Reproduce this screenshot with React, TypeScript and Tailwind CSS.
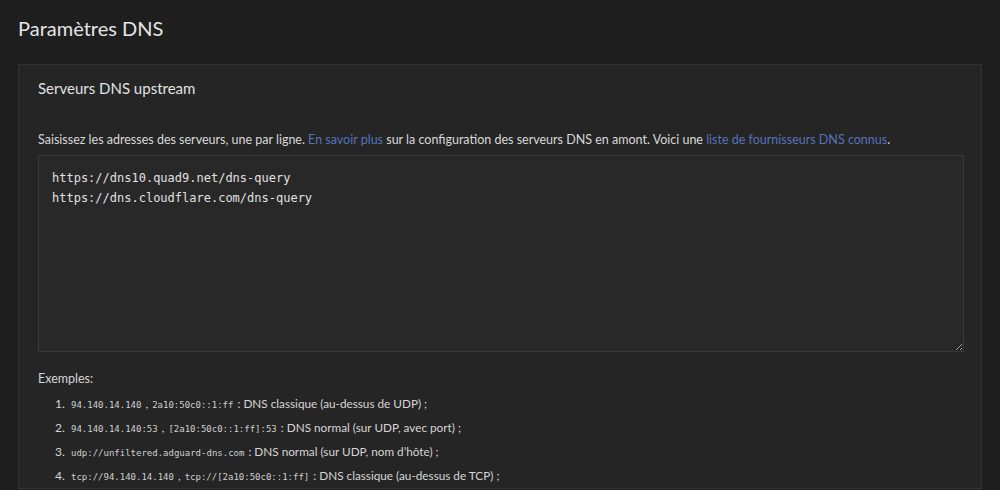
import React from "react";

const sans = "font-['Lato','Segoe_UI','Noto_Sans',sans-serif]";
const mono = "font-['DejaVu_Sans_Mono','Liberation_Mono',monospace]";

function Code({ children }: { children: React.ReactNode }) {
  return <code className={`${mono} px-[1px] text-[9px] text-[#d0d0d0]`}>{children}</code>;
}

const examples: { codes: string[]; text: string }[] = [
  { codes: ["94.140.14.140", "2a10:50c0::1:ff"], text: "DNS classique (au-dessus de UDP) ;" },
  { codes: ["94.140.14.140:53", "[2a10:50c0::1:ff]:53"], text: "DNS normal (sur UDP, avec port) ;" },
  { codes: ["udp://unfiltered.adguard-dns.com"], text: "DNS normal (sur UDP, nom d’hôte) ;" },
  { codes: ["tcp://94.140.14.140", "tcp://[2a10:50c0::1:ff]"], text: "DNS classique (au-dessus de TCP) ;" },
];

export default function App() {
  return (
    <div className={`${sans} w-[1000px] h-[490px] overflow-hidden bg-[#1e1e1e] text-[#d6d6d6]`}>
      <h1 className="px-[18px] pt-[14px] text-[20px] leading-[28px] text-[#e4e4e4] font-normal">
        Paramètres DNS
      </h1>
      <div className="mx-[18px] mt-[22px] border border-[#323232] bg-[#252525]">
        <div className="px-[19px] pt-[13px] pb-[33px] text-[15px] leading-[20px] text-[#e2e2e2]">
          Serveurs DNS upstream
        </div>
        <div className="px-[19px]">
          <p className="text-[12.5px] leading-[18px] text-[#d8d8d8] whitespace-nowrap">
            Saisissez les adresses des serveurs, une par ligne.{" "}
            <a className="text-[#5673b8]">En savoir plus</a> sur la configuration des serveurs DNS en amont. Voici une{" "}
            <a className="text-[#5673b8]">liste de fournisseurs DNS connus</a>.
          </p>
          <textarea
            readOnly
            spellCheck={false}
            className={`${mono} mt-[6px] block w-[926px] h-[197px] resize-y border border-[#383838] bg-[#282828] px-[13px] py-[12px] text-[12px] leading-[20px] text-[#e0e0e0] outline-none`}
            defaultValue={"https://dns10.quad9.net/dns-query\nhttps://dns.cloudflare.com/dns-query"}
          />
          <div className="mt-[18px] text-[12.5px] leading-[18px] text-[#d6d6d6]">Exemples:</div>
          <ol className="mt-[4px] pl-[17px] text-[11.75px]">
            {examples.map((ex, i) => (
              <li key={i} className="flex items-baseline h-[24px] leading-[24px]">
                <span className="w-[15px] text-[12px] text-[#d6d6d6]">{i + 1}.</span>
                <span>
                  {ex.codes.map((c, j) => (
                    <React.Fragment key={j}>
                      {j > 0 && <span className="text-[#d6d6d6]"> , </span>}
                      <Code>{c}</Code>
                    </React.Fragment>
                  ))}
                  <span className="text-[#d6d6d6]"> : {ex.text}</span>
                </span>
              </li>
            ))}
          </ol>
        </div>
      </div>
    </div>
  );
}
